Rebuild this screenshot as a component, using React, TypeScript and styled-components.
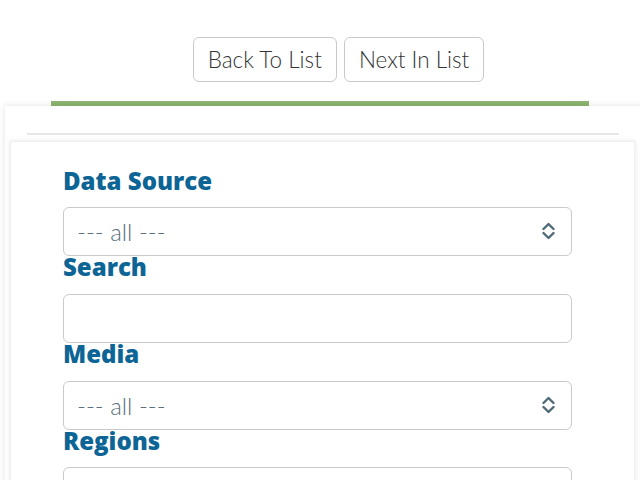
import React from "react";
import styled, { createGlobalStyle } from "styled-components";

const Global = createGlobalStyle`
  html, body { margin: 0; padding: 0; background: #fff; overflow: hidden; }
  body { font-family: Lato, "Open Sans", sans-serif; }
  * { box-sizing: border-box; }
`;

const Page = styled.div`
  width: 640px;
  height: 480px;
  overflow: hidden;
`;

const NavRow = styled.div`
  display: flex;
  justify-content: center;
  gap: 7px;
  padding: 37px 0 0 37px;
`;

const NavButton = styled.button`
  height: 45px;
  padding: 0 14px;
  background: #fff;
  border: 1px solid #c9c9c9;
  border-radius: 6px;
  font-family: Lato, sans-serif;
  font-size: 22.5px;
  font-weight: 300;
  color: #333;
  cursor: pointer;
`;

const GreenBar = styled.div`
  height: 5px;
  margin: 19px 51px 0;
  background: #8db56e;
`;

const OuterCard = styled.div`
  margin-left: 5px;
  width: 640px;
  padding-top: 27px;
  background: #fff;
  box-shadow: 0 0 6px rgba(0, 0, 0, 0.12);
  min-height: 400px;
`;

const Rule = styled.hr`
  margin: 0 26px 0 22px;
  border: 0;
  height: 2px;
  background: #e6e6e6;
`;

const InnerCard = styled.div`
  margin: 6px 10px 0 5px;
  padding: 27.5px 62px 40px 52px;
  background: #fff;
  border: 1px solid #f0f0f0;
  box-shadow: 0 0 5px rgba(0, 0, 0, 0.1);
`;

const Field = styled.div`
  display: flex;
  flex-direction: column;
`;

const Label = styled.label`
  font-family: "Open Sans", Lato, sans-serif;
  font-size: 24px;
  font-weight: 800;
  line-height: 21px;
  color: #0d6595;
  margin-bottom: 16.7px;
`;

const SelectWrap = styled.div`
  position: relative;
  height: 49px;
`;

const Select = styled.select`
  appearance: none;
  width: 100%;
  height: 49px;
  padding: 0 40px 0 13px;
  border: 1px solid #cacaca;
  border-radius: 6px;
  background: #fff;
  font-family: Lato, sans-serif;
  font-size: 24px;
  font-weight: 300;
  color: #5a707d;
  outline: none;
`;

const Chevron = styled.svg`
  position: absolute;
  right: 17px;
  top: 14px;
  width: 13px;
  height: 20px;
  pointer-events: none;
`;

const Input = styled.input`
  width: 100%;
  height: 49px;
  padding: 0 13px;
  border: 1px solid #cacaca;
  border-radius: 6px;
  background: #fff;
  font-family: Lato, sans-serif;
  font-size: 20px;
  outline: none;
`;

const SelectField: React.FC<{ label: string }> = ({ label }) => (
  <Field>
    <Label>{label}</Label>
    <SelectWrap>
      <Select defaultValue="all">
        <option value="all">--- all ---</option>
      </Select>
      <Chevron viewBox="0 0 13 20" fill="none">
        <path
          d="M1.5 8 L6.5 3 L11.5 8 M1.5 12 L6.5 17 L11.5 12"
          stroke="#4f6b78"
          strokeWidth="2.4"
          strokeLinecap="round"
          strokeLinejoin="round"
        />
      </Chevron>
    </SelectWrap>
  </Field>
);

const InputField: React.FC<{ label: string }> = ({ label }) => (
  <Field>
    <Label>{label}</Label>
    <Input type="text" />
  </Field>
);

export default function App() {
  return (
    <Page>
      <Global />
      <NavRow>
        <NavButton>Back To List</NavButton>
        <NavButton>Next In List</NavButton>
      </NavRow>
      <GreenBar />
      <OuterCard>
        <Rule />
        <InnerCard>
          <SelectField label="Data Source" />
          <InputField label="Search" />
          <SelectField label="Media" />
          <InputField label="Regions" />
        </InnerCard>
      </OuterCard>
    </Page>
  );
}
